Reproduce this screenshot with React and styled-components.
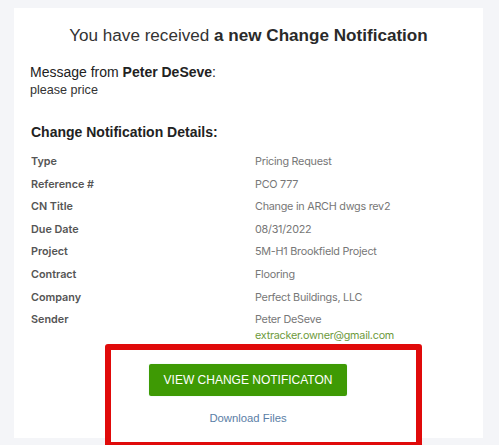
import styled, { createGlobalStyle } from "styled-components";

const GlobalStyle = createGlobalStyle`
  html, body {
    margin: 0;
    padding: 0;
    background: #f4f5f8;
  }
  body {
    font-family: "Liberation Sans", Arial, sans-serif;
    overflow: hidden;
  }
`;

const Page = styled.div`
  width: 499px;
  height: 445px;
  padding: 8px 16px 0 14px;
  box-sizing: border-box;
  overflow: hidden;
`;

const Card = styled.div`
  background: #ffffff;
  height: 430px;
  padding: 17px 16px 0 16px;
  box-sizing: border-box;
  display: flex;
  flex-direction: column;
`;

const Title = styled.h1`
  margin: 0;
  font-size: 17.1px;
  font-weight: normal;
  color: #333333;
  text-align: center;
  line-height: 22px;
  b {
    font-weight: bold;
    color: #2a2a2a;
  }
`;

const Message = styled.div`
  margin-top: 16px;
  color: #222222;
  font-size: 14px;
  line-height: 18px;
  b {
    font-weight: bold;
  }
`;

const MessageBody = styled.div`
  font-size: 12.6px;
  line-height: 18px;
  color: #333333;
`;

const SectionTitle = styled.h2`
  margin: 23px 0 0 1px;
  font-size: 14px;
  font-weight: bold;
  color: #222222;
  line-height: 20px;
`;

const Details = styled.div`
  margin-top: 12px;
  display: grid;
  grid-template-columns: 224px 1fr;
  row-gap: 7.6px;
  font-family: Inter, "Noto Sans", sans-serif;
  font-size: 10.8px;
  line-height: 15px;
  padding-left: 1px;
`;

const Label = styled.div`
  font-weight: 600;
  color: #555555;
`;

const Value = styled.div`
  color: #777777;
  letter-spacing: -0.25px;
`;

const Email = styled.div`
  color: #6d9a3c;
  margin-top: 1px;
`;

const Actions = styled.div`
  align-self: flex-start;
  margin-left: 75px;
  margin-top: 1px;
  width: 317px;
  height: 104px;
  box-sizing: border-box;
  border: 6px solid #e00a0a;
  border-radius: 3px;
  background: #ffffff;
  padding: 14px 0 0 38px;
  flex-shrink: 0;
`;

const Stack = styled.div`
  width: 198px;
  display: flex;
  flex-direction: column;
  align-items: center;
`;

const Button = styled.a`
  display: flex;
  align-items: center;
  justify-content: center;
  width: 198px;
  height: 32px;
  background: #3e9a04;
  color: #ffffff;
  font-size: 12px;
  border-radius: 2px;
  text-decoration: none;
  box-shadow: 0 0 2px #d6f5ea;
`;

const Link = styled.a`
  margin-top: 16px;
  color: #5a7ea6;
  font-size: 11.3px;
  text-decoration: none;
`;

const rows = [
  ["Type", "Pricing Request"],
  ["Reference #", "PCO 777"],
  ["CN Title", "Change in ARCH dwgs rev2"],
  ["Due Date", "08/31/2022"],
  ["Project", "5M-H1 Brookfield Project"],
  ["Contract", "Flooring"],
  ["Company", "Perfect Buildings, LLC"],
];

const App = () => {
  return (
    <Page>
      <GlobalStyle />
      <Card>
        <Title>
          You have received <b>a new Change Notification</b>
        </Title>
        <Message>
          Message from <b>Peter DeSeve</b>:
          <MessageBody>please price</MessageBody>
        </Message>
        <SectionTitle>Change Notification Details:</SectionTitle>
        <Details>
          {rows.flatMap(([label, value]) => [
            <Label key={label}>{label}</Label>,
            <Value key={label + "-v"}>{value}</Value>,
          ])}
          <Label>Sender</Label>
          <Value>
            Peter DeSeve
            <Email>extracker.owner@gmail.com</Email>
          </Value>
        </Details>
        <Actions>
          <Stack>
            <Button href="#">VIEW CHANGE NOTIFICATON</Button>
            <Link href="#">Download Files</Link>
          </Stack>
        </Actions>
      </Card>
    </Page>
  );
};

export default App;
